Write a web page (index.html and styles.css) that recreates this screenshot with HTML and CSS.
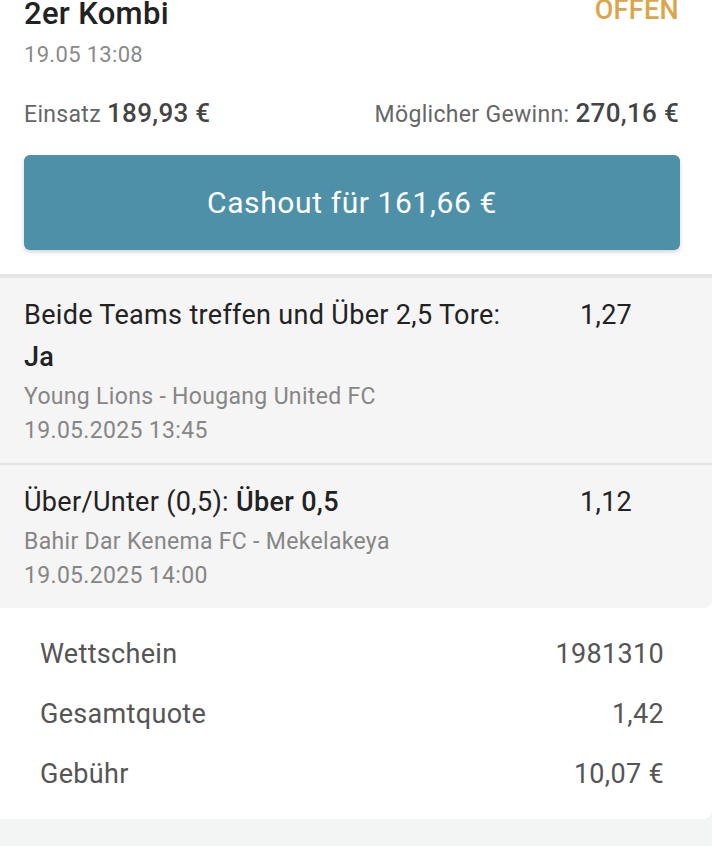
FILE: index.html
```html
<!DOCTYPE html>
<html lang="de">
  <head>
    <meta charset="UTF-8" />
    <meta name="viewport" content="width=device-width, initial-scale=1.0" />
    <title>2er Kombi</title>
    <link rel="stylesheet" href="styles.css">
  </head>
  <body>
    <div class="slip">
      <div class="header">
        <div class="title-row">
          <h1>2er Kombi</h1>
          <span class="status">OFFEN</span>
        </div>
        <div class="placed">19.05 13:08</div>

        <div class="stakes">
          <span>Einsatz <strong>189,93 €</strong></span>
          <span>Möglicher Gewinn: <strong>270,16 €</strong></span>
        </div>

        <button class="cashout-btn">Cashout für 161,66 €</button>
      </div>

      <div class="bets">
        <div class="bet">
          <div class="bet-main">
            <div class="market">Beide Teams treffen und Über 2,5 Tore:<br><strong>Ja</strong></div>
            <div class="teams">Young Lions - Hougang United FC</div>
            <div class="kickoff">19.05.2025 13:45</div>
          </div>
          <div class="odds">1,27</div>
        </div>
        <div class="bet">
          <div class="bet-main">
            <div class="market">Über/Unter (0,5): <strong>Über 0,5</strong></div>
            <div class="teams">Bahir Dar Kenema FC - Mekelakeya</div>
            <div class="kickoff">19.05.2025 14:00</div>
          </div>
          <div class="odds">1,12</div>
        </div>
      </div>

      <div class="summary">
        <div class="summary-row">
          <span>Wettschein</span>
          <span>1981310</span>
        </div>
        <div class="summary-row">
          <span>Gesamtquote</span>
          <span>1,42</span>
        </div>
        <div class="summary-row">
          <span>Gebühr</span>
          <span>10,07 €</span>
        </div>
      </div>
    </div>
  </body>
</html>
```

FILE: styles.css
```css
body {
  font-family: Roboto, "Liberation Sans", sans-serif;
  letter-spacing: 0.02em;
  margin: 0;
  padding: 0;
  background-color: #f3f4f4;
  color: #222;
  overflow: hidden;
}
.slip {
  background-color: #fff;
}
.header {
  padding: 0 33px 24px 24px;
  border-bottom: 4px solid #e4e5e5;
}
.title-row {
  display: flex;
  justify-content: space-between;
  align-items: baseline;
  margin-top: -3px;
}
h1 {
  margin: 0;
  font-size: 31px;
  line-height: 34px;
  font-weight: 500;
  color: #222;
}
.status {
  font-size: 27px;
  font-weight: 500;
  color: #dba54b;
  transform: translateY(-5px);
}
.placed {
  margin-top: 9px;
  font-size: 22px;
  line-height: 30px;
  color: #8a8a8a;
}
.stakes {
  display: flex;
  justify-content: space-between;
  align-items: baseline;
  margin-top: 26px;
  font-size: 23px;
  line-height: 34px;
  color: #666;
}
.stakes strong {
  font-size: 26px;
  font-weight: 500;
  color: #444;
}
.cashout-btn {
  display: block;
  width: calc(100% + 1px);
  height: 95px;
  margin-top: 23px;
  background-color: #4e90a8;
  color: #fff;
  border: none;
  border-radius: 6px;
  font-family: inherit;
  letter-spacing: 0.02em;
  font-size: 30px;
  box-shadow: 0 2px 4px rgba(0, 0, 0, 0.18);
}
.bets {
  background-color: #f5f5f5;
  border-bottom-right-radius: 8px;
}
.bet {
  display: flex;
  padding: 16px 24px 15px;
}
.bet + .bet {
  border-top: 2px solid #e2e2e2;
}
.bet-main {
  flex: 1;
}
.market {
  font-size: 27px;
  line-height: 42px;
  color: #222;
}
.market strong {
  font-weight: 500;
}
.teams,
.kickoff {
  font-size: 23px;
  line-height: 34px;
  color: #868686;
}
.teams {
  margin-top: 2px;
}
.odds {
  width: 108px;
  font-size: 27px;
  line-height: 42px;
  color: #222;
}
.summary {
  background-color: #fff;
  padding: 16px 48px 15px 40px;
  border-radius: 0 8px 8px 0;
  box-shadow: 0 3px 4px rgba(0, 0, 0, 0.1);
}
.summary-row {
  display: flex;
  justify-content: space-between;
  font-size: 27px;
  line-height: 60px;
  color: #555;
}
```
